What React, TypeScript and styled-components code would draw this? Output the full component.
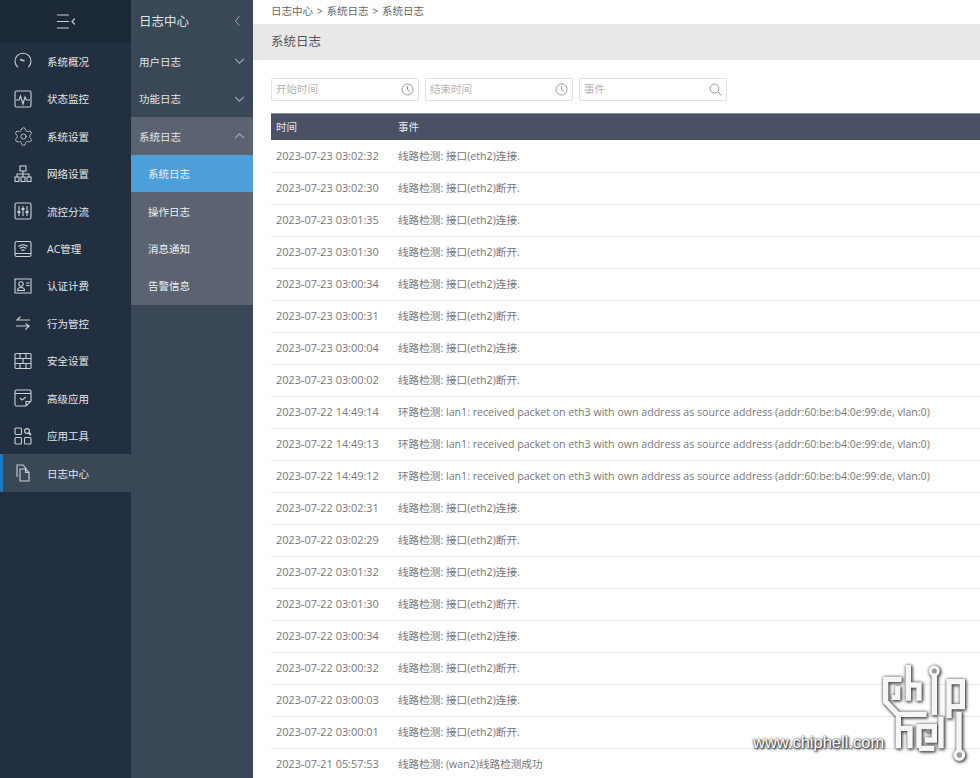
import React from 'react';
import styled, { createGlobalStyle } from 'styled-components';
import { Settings } from 'lucide-react';

const GlobalStyle = createGlobalStyle`
  html, body { margin: 0; padding: 0; height: 100%; overflow: hidden; background: #fff; }
  body { font-family: "Open Sans", "Noto Sans CJK SC", sans-serif; }
  #root { height: 100%; }
`;

const Page = styled.div`
  position: relative;
  display: flex;
  width: 980px;
  height: 778px;
  overflow: hidden;
`;

const MainNav = styled.nav`
  width: 131px;
  flex: none;
  background: #212f40;
`;

const NavTop = styled.div`
  height: 42.6px;
  background: #1b2837;
  display: flex;
  align-items: center;
  justify-content: center;
  color: #c9ced4;
`;

const NavItem = styled.div<{ $active?: boolean }>`
  height: 37.45px;
  box-sizing: border-box;
  display: flex;
  align-items: center;
  padding-left: ${p => (p.$active ? '11px' : '14px')};
  gap: 15px;
  font-size: 10.5px;
  color: #e3e6e9;
  background: ${p => (p.$active ? '#394757' : 'transparent')};
  border-left: ${p => (p.$active ? '3px solid #1f77bd' : 'none')};
  svg { flex: none; width: 18px; height: 18px; color: #ccd0d5; }
`;

const GearIcon = styled(Settings)`
  && { width: 21px; height: 21px; margin: 0 -1.5px; }
`;

const SubNav = styled.aside`
  width: 122px;
  flex: none;
  background: #3a4757;
`;

const SubTitle = styled.div`
  height: 42.6px;
  box-sizing: border-box;
  display: flex;
  align-items: center;
  justify-content: space-between;
  padding: 0 12px 1px 8px;
  font-size: 12.5px;
  color: #dfe3e7;
`;

const SubGroup = styled.div<{ $open?: boolean }>`
  height: 37.45px;
  display: flex;
  align-items: center;
  justify-content: space-between;
  padding: 0 8px;
  font-size: 10.5px;
  color: #e3e6e9;
  background: ${p => (p.$open ? '#5a636f' : 'transparent')};
`;

const SubList = styled.div`
  background: #5a636f;
`;

const SubLink = styled.div<{ $active?: boolean }>`
  height: 37.45px;
  display: flex;
  align-items: center;
  padding-left: 17px;
  font-size: 10.5px;
  color: #eef0f2;
  background: ${p => (p.$active ? '#4d9fd9' : 'transparent')};
`;

const Content = styled.main`
  flex: 1;
  min-width: 0;
`;

const Breadcrumb = styled.div`
  height: 24px;
  box-sizing: border-box;
  display: flex;
  align-items: center;
  padding: 0 0 3px 18px;
  font-size: 10.5px;
  word-spacing: 1px;
  color: #666;
  white-space: pre;
`;

const TitleBar = styled.div`
  height: 36px;
  box-sizing: border-box;
  background: #e8e8e8;
  display: flex;
  align-items: center;
  padding: 0 0 3px 18px;
  font-size: 12.5px;
  color: #555;
`;

const Filters = styled.div`
  display: flex;
  gap: 6px;
  padding: 18px 0 0 18px;
`;

const Field = styled.div`
  width: 148px;
  height: 23px;
  box-sizing: border-box;
  border: 1px solid #e2e2e2;
  border-radius: 2px;
  display: flex;
  align-items: center;
  justify-content: space-between;
  padding: 0 4px;
  font-size: 10.5px;
  color: #b4b4b4;
`;

const Placeholder = styled.span`
  margin-bottom: 2px;
`;

const Table = styled.table`
  width: 709px;
  margin: 12px 0 0 18px;
  border-collapse: collapse;
  table-layout: fixed;
`;

const HeadCell = styled.th<{ $w?: number }>`
  width: ${p => (p.$w ? `${p.$w}px` : 'auto')};
  height: 27px;
  padding: 0 0 0 5px;
  background: #4b5165;
  box-shadow: inset 0 1px 0 #8a8f9c;
  box-sizing: border-box;
  color: #e8e9ec;
  font-size: 10.5px;
  font-weight: 400;
  text-align: left;
`;

const Row = styled.tr`
  height: 32px;
  border-bottom: 1px solid #e8e8e8;
`;

const TimeCell = styled.td`
  padding: 0 0 1px 5px;
  font-size: 10.9px;
  color: #777;
  white-space: nowrap;
`;

const EventCell = styled.td`
  padding: 0 0 1px 5px;
  font-size: 10.62px;
  color: #777;
  white-space: nowrap;
`;

const Watermark = styled.div`
  position: absolute;
  left: 752px;
  top: 662px;
  width: 228px;
  height: 116px;
  pointer-events: none;
`;

const WatermarkText = styled.span`
  position: absolute;
  left: 1px;
  top: 71px;
  font-family: "Liberation Sans", sans-serif;
  font-size: 16.5px;
  color: #fff;
  text-shadow: 0 0 2px #333, 1px 1px 2px #333, 1px 1px 3px #555;
`;

const LogoMark = styled.svg`
  position: absolute;
  left: 0;
  top: 0;
  filter: drop-shadow(1px 1px 1.5px #444) drop-shadow(0 0 1.5px #777);
`;

const Stroke = { fill: 'none', stroke: 'currentColor', strokeWidth: 1.1 };

const icons: Record<string, React.ReactNode> = {
  gauge: <><path d="M3.800 15.300A8 8 0 1 1 14.200 15.300" {...Stroke} /><path d="M6 7.500l4.500 1.500" {...Stroke} strokeWidth={1.500} /></>,
  pulse: <><rect x="1" y="1" width="16" height="16" rx="1.500" {...Stroke} /><path d="M2 10h3l1.500-4 2.500 8 2-7 1.500 3h3.500" {...Stroke} /></>,
  net: <><rect x="6" y="1" width="6" height="5" {...Stroke} /><rect x="1" y="12" width="4" height="4.500" {...Stroke} /><rect x="7" y="12" width="4" height="4.500" {...Stroke} /><rect x="13" y="12" width="4" height="4.500" {...Stroke} /><path d="M9 6v6M3 12V9h12v3" {...Stroke} /></>,
  sliders: <><rect x="1" y="1" width="16" height="16" rx="1.500" {...Stroke} /><path d="M5 4v10M9 4v10M13 4v10" {...Stroke} /><path d="M3.500 10h3M7.500 7h3M11.500 10h3" {...Stroke} strokeWidth={2} /></>,
  wifi: <><rect x="1" y="1.500" width="16" height="15" rx="1.500" {...Stroke} /><path d="M1 13.500h16M4.500 6.500a7 7 0 0 1 9 0M6 8.500a4.500 4.500 0 0 1 6 0M7.500 10.500a2.200 2.200 0 0 1 3 0" {...Stroke} /></>,
  card: <><path d="M1 2h16v14H1z" {...Stroke} /><circle cx="7" cy="7" r="2.200" {...Stroke} /><path d="M3.500 13.500c0-4 7-4 7 0zM12 6h3.500M12 8.500h3.500" {...Stroke} /></>,
  swap: <><path d="M16 6H3l3.500-3.500M2 12h13l-3.500 3.500M15 12l-3.500-2.500" {...Stroke} /></>,
  wall: <><rect x="1" y="1.500" width="16" height="15" rx="1" {...Stroke} /><path d="M1 6.500h16M1 11.500h16M6 1.500v5M12 1.500v5M9 6.500v5M6 11.500v5M12 11.500v5" {...Stroke} /></>,
  note: <><path d="M12 17H2.500A1.500 1.500 0 0 1 1 15.500v-13A1.500 1.500 0 0 1 2.500 1h13A1.500 1.500 0 0 1 17 2.500V12zM1 4.500h16M12 17v-4.500h5M6 9l2 2 4-3" {...Stroke} /></>,
  apps: <><rect x="1" y="1" width="6.500" height="6.500" rx="1" {...Stroke} /><rect x="1" y="10.500" width="6.500" height="6.500" rx="1" {...Stroke} /><rect x="10.500" y="10.500" width="6.500" height="6.500" rx="1" {...Stroke} /><circle cx="13" cy="4" r="2.400" {...Stroke} /><path d="M14.500 5.500l2.500 2.500" {...Stroke} strokeWidth={1.800} /></>,
  docs: <><path d="M3 13V1h6l3 3.500v1" {...Stroke} /><path d="M6 5h5.500l3.500 3.500V17H6zM11.500 5v3.500H15" {...Stroke} /></>,
};

const Glyph = ({ name }: { name: string }) =>
  name === 'gear' ? <GearIcon strokeWidth={1} /> : <svg viewBox="0 0 18 18">{icons[name]}</svg>;

const Chevron = ({ dir }: { dir: 'up' | 'down' | 'left' }) => {
  const d = dir === 'up' ? 'M1 7l5-5 5 5' : dir === 'down' ? 'M1 2l5 5 5-5' : 'M8 1L3 7l5 6';
  const box = dir === 'left' ? '0 0 10 14' : '0 0 12 9';
  return (
    <svg width={dir === 'left' ? 8 : 11} height={dir === 'left' ? 12 : 8} viewBox={box}>
      <path d={d} fill="none" stroke="#a4abb3" strokeWidth="1.200" />
    </svg>
  );
};

const Clock = () => (
  <svg width="13" height="13" viewBox="0 0 13 13" fill="none" stroke="#999" strokeWidth="1">
    <circle cx="6.500" cy="6.500" r="5.500" />
    <path d="M6.500 3v3.800l2.200 1.400" />
  </svg>
);

const Search = () => (
  <svg width="13" height="13" viewBox="0 0 13 13" fill="none" stroke="#999" strokeWidth="1">
    <circle cx="5.500" cy="5.500" r="4.500" />
    <path d="M9 9l3.500 3.500" />
  </svg>
);

const navItems = [
  ['gauge', '系统概况'], ['pulse', '状态监控'], ['gear', '系统设置'], ['net', '网络设置'],
  ['sliders', '流控分流'], ['wifi', 'AC管理'], ['card', '认证计费'], ['swap', '行为管控'],
  ['wall', '安全设置'], ['note', '高级应用'], ['apps', '应用工具'], ['docs', '日志中心'],
];

const up = '线路检测: 接口(eth2)连接.';
const down = '线路检测: 接口(eth2)断开.';
const loop = '环路检测: lan1: received packet on eth3 with own address as source address (addr:60:be:b4:0e:99:de, vlan:0)';

const rows = [
  ['2023-07-23 03:02:32', up], ['2023-07-23 03:02:30', down], ['2023-07-23 03:01:35', up],
  ['2023-07-23 03:01:30', down], ['2023-07-23 03:00:34', up], ['2023-07-23 03:00:31', down],
  ['2023-07-23 03:00:04', up], ['2023-07-23 03:00:02', down], ['2023-07-22 14:49:14', loop],
  ['2023-07-22 14:49:13', loop], ['2023-07-22 14:49:12', loop], ['2023-07-22 03:02:31', up],
  ['2023-07-22 03:02:29', down], ['2023-07-22 03:01:32', up], ['2023-07-22 03:01:30', down],
  ['2023-07-22 03:00:34', up], ['2023-07-22 03:00:32', down], ['2023-07-22 03:00:03', up],
  ['2023-07-22 03:00:01', down], ['2023-07-21 05:57:53', '线路检测: (wan2)线路检测成功'],
];

export default function App() {
  return (
    <Page>
      <GlobalStyle />
      <MainNav>
        <NavTop>
          <svg width="18" height="15" viewBox="0 0 18 15" fill="none" stroke="currentColor" strokeWidth="1.200">
            <path d="M0 1h12M0 7.500h12M0 14h12M18 4.500l-3 3 3 3" />
          </svg>
        </NavTop>
        {navItems.map(([icon, label]) => (
          <NavItem key={label} $active={label === '日志中心'}>
            <Glyph name={icon} />
            {label}
          </NavItem>
        ))}
      </MainNav>
      <SubNav>
        <SubTitle>日志中心<Chevron dir="left" /></SubTitle>
        <SubGroup>用户日志<Chevron dir="down" /></SubGroup>
        <SubGroup>功能日志<Chevron dir="down" /></SubGroup>
        <SubGroup $open>系统日志<Chevron dir="up" /></SubGroup>
        <SubList>
          <SubLink $active>系统日志</SubLink>
          <SubLink>操作日志</SubLink>
          <SubLink>消息通知</SubLink>
          <SubLink>告警信息</SubLink>
        </SubList>
      </SubNav>
      <Content>
        <Breadcrumb>日志中心 &gt; 系统日志 &gt; 系统日志</Breadcrumb>
        <TitleBar>系统日志</TitleBar>
        <Filters>
          <Field><Placeholder>开始时间</Placeholder><Clock /></Field>
          <Field><Placeholder>结束时间</Placeholder><Clock /></Field>
          <Field><Placeholder>事件</Placeholder><Search /></Field>
        </Filters>
        <Table>
          <thead>
            <tr>
              <HeadCell $w={122}>时间</HeadCell>
              <HeadCell>事件</HeadCell>
            </tr>
          </thead>
          <tbody>
            {rows.map(([time, event]) => (
              <Row key={time}>
                <TimeCell>{time}</TimeCell>
                <EventCell>{event}</EventCell>
              </Row>
            ))}
          </tbody>
        </Table>
      </Content>
      <Watermark>
        <LogoMark width="228" height="116" viewBox="0 0 228 116">
          <g transform="translate(123 -2) scale(.3333)" fill="none" stroke="#f6f6f6" strokeWidth="16">
            <path d="M80 58H32V125L68 163H155" />
            <path d="M68 78V112H50" />
            <path d="M100 15V122M100 75H132V122" />
            <path d="M178 45V165" />
            <path d="M222 175V65H262V140H228" />
            <path d="M70 170V265M70 205H105V265" />
            <path d="M132 265V200H178V240H150M132 265H178" />
            <path d="M198 170V265" />
            <path d="M252 155V270" />
            <circle cx="178" cy="33" r="12" fill="#999" strokeWidth="9" />
            <circle cx="160" cy="212" r="6" fill="#999" stroke="none" />
            <circle cx="253" cy="285" r="13" fill="#999" strokeWidth="10" />
          </g>
        </LogoMark>
        <WatermarkText>www.chiphell.com</WatermarkText>
      </Watermark>
    </Page>
  );
}
